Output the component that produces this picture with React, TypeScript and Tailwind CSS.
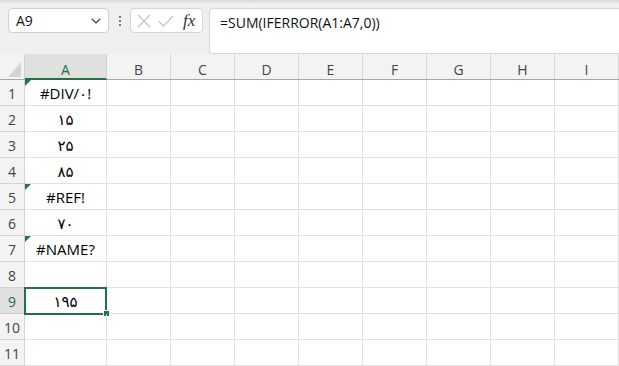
import { ChevronDown } from 'lucide-react';

const cols = ['A', 'B', 'C', 'D', 'E', 'F', 'G', 'H', 'I'];

const values: Record<number, { text: string; flag?: boolean }> = {
    1: { text: '#DIV/۰!', flag: true },
    2: { text: '۱۵' },
    3: { text: '۲۵' },
    4: { text: '۸۵' },
    5: { text: '#REF!', flag: true },
    6: { text: '۷۰' },
    7: { text: '#NAME?', flag: true },
    9: { text: '۱۹۵' },
};

const font = { fontFamily: '"Open Sans", "Noto Sans", "DejaVu Sans", sans-serif' };

export default function App() {
    const rows = Array.from({ length: 11 }, (_, i) => i + 1);

    return (
        <div className="w-[619px] h-[366px] overflow-hidden bg-[#f0f0f0] text-[#222]" style={font}>
            {/* FORMULA BAR */}
            <div className="h-[54px] bg-gradient-to-b from-[#d9d9d9] via-[#efefef] via-[8%] to-[#f0f0f0] flex items-start pt-[8px] pl-[8px]">
                <div className="w-[101px] h-[25px] bg-white border border-[#d1d1d1] rounded-[4px] flex items-center justify-between pl-[7px] pr-[4px] text-[14px] text-[#111]">
                    <span>A9</span>
                    <ChevronDown size={16} strokeWidth={1.6} className="text-[#444]" />
                </div>
                <div className="w-[21px] h-[25px] flex flex-col items-center justify-center gap-[2px]">
                    <span className="w-[2px] h-[2px] bg-[#555] rounded-full" />
                    <span className="w-[2px] h-[2px] bg-[#555] rounded-full" />
                    <span className="w-[2px] h-[2px] bg-[#555] rounded-full" />
                </div>
                <div className="w-[73px] h-[25px] bg-white border border-[#d6d6d6] rounded-[4px] flex items-center pl-[6px] gap-[7px]">
                    <svg width="14" height="14" viewBox="0 0 14 14" className="stroke-[#c4c4c4]" fill="none" strokeWidth="1.2">
                        <path d="M1 1 L13 13 M13 1 L1 13" />
                    </svg>
                    <svg width="16" height="14" viewBox="0 0 16 14" className="stroke-[#c4c4c4]" fill="none" strokeWidth="1.2">
                        <path d="M1 7.5 L5.5 12 L15 2" />
                    </svg>
                    <span className="ml-[2px] text-[17px] italic text-[#333] leading-none" style={{ fontFamily: '"Liberation Serif", serif' }}>
                        fx
                    </span>
                </div>
                <div className="ml-[6px] flex-1 h-[46px] bg-white border border-[#d6d6d6] rounded-l-[4px] border-r-0 pl-[10px] pt-[3px] text-[14px] text-[#111]">
                    =SUM(IFERROR(A1:A7,0))
                </div>
            </div>

            {/* COLUMN HEADERS */}
            <div className="flex h-[26px] border-b border-[#a6a6a6] bg-[#f3f3f3]">
                <div className="w-[25px] shrink-0 flex items-end justify-end pr-[3px] pb-[2px] border-r border-[#d0d0d0]">
                    <svg width="13" height="15" viewBox="0 0 13 15">
                        <path d="M13 0 L13 15 L0 15 Z" fill="#d4d4d4" />
                    </svg>
                </div>
                {cols.map((c) => (
                    <div
                        key={c}
                        className={
                            c === 'A'
                                ? 'w-[82px] shrink-0 flex items-center justify-center pt-[6px] text-[14px] bg-[#e0e0e0] text-[#1a7343] border-b-2 border-[#217346] -mb-[1px] border-r border-r-[#d0d0d0]'
                                : 'w-[64px] shrink-0 flex items-center justify-center pt-[6px] text-[14px] text-[#444] border-r border-[#d8d8d8]'
                        }
                    >
                        {c}
                    </div>
                ))}
            </div>

            {/* GRID */}
            <div className="bg-white">
                {rows.map((r) => {
                    const v = values[r];
                    const selected = r === 9;
                    return (
                        <div key={r} className="flex h-[26px]">
                            <div
                                className={
                                    selected
                                        ? 'w-[25px] shrink-0 flex items-end justify-center pb-[1px] text-[14px] bg-[#e0e0e0] text-[#1a7343] border-r border-b border-[#c8c8c8]'
                                        : 'w-[25px] shrink-0 flex items-end justify-center pb-[1px] text-[14px] bg-[#f3f3f3] text-[#444] border-r border-b border-[#d4d4d4]'
                                }
                            >
                                {r}
                            </div>
                            <div className="relative w-[82px] shrink-0 flex items-center justify-center text-[15px] text-black border-r border-b border-[#e1e1e1]">
                                {v?.flag && (
                                    <svg width="6" height="6" viewBox="0 0 6 6" className="absolute top-0 left-0">
                                        <path d="M0 0 L6 0 L0 6 Z" fill="#1e7a3f" />
                                    </svg>
                                )}
                                <span className="pt-[2px]">{v?.text}</span>
                                {selected && (
                                    <>
                                        <span className="absolute -left-[1px] -top-[1px] w-[83px] h-[28px] border-2 border-[#217346] pointer-events-none" />
                                        <span className="absolute -right-[4px] -bottom-[4px] w-[7px] h-[7px] bg-[#217346] border border-white" />
                                    </>
                                )}
                            </div>
                            {cols.slice(1).map((c) => (
                                <div key={c} className="w-[64px] shrink-0 border-r border-b border-[#e1e1e1]" />
                            ))}
                        </div>
                    );
                })}
            </div>
        </div>
    );
}
